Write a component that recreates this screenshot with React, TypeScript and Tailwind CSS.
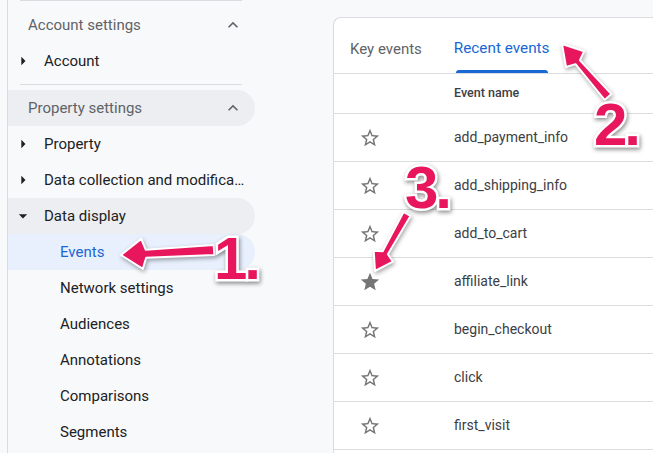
import React from 'react';

type Pt = [number, number];

// builds a tapered arrow polygon from tail to tip
function arrowPoints(tip: Pt, tail: Pt, headLen: number, headHalf: number, neckHalf: number, tailHalf: number) {
  const dx = tail[0] - tip[0];
  const dy = tail[1] - tip[1];
  const len = Math.hypot(dx, dy);
  const ux = dx / len;
  const uy = dy / len;
  const px = -uy;
  const py = ux;
  const neck: Pt = [tip[0] + ux * headLen, tip[1] + uy * headLen];
  const pts: Pt[] = [
    tip,
    [neck[0] + px * headHalf - ux * 4, neck[1] + py * headHalf - uy * 4],
    [neck[0] + px * neckHalf, neck[1] + py * neckHalf],
    [tail[0] + px * tailHalf, tail[1] + py * tailHalf],
    [tail[0] - px * tailHalf, tail[1] - py * tailHalf],
    [neck[0] - px * neckHalf, neck[1] - py * neckHalf],
    [neck[0] - px * headHalf - ux * 4, neck[1] - py * headHalf - uy * 4],
  ];
  return pts.map((p) => `${p[0].toFixed(1)},${p[1].toFixed(1)}`).join(' ');
}

const arrows = [
  arrowPoints([121, 255], [214, 250], 25, 15, 4, 5),
  arrowPoints([562, 44], [608, 97], 24, 12, 3, 4.5),
  arrowPoints([375, 271], [407, 214], 21, 11, 3, 4),
];

const events = [
  { name: 'add_payment_info', key: false },
  { name: 'add_shipping_info', key: false },
  { name: 'add_to_cart', key: false },
  { name: 'affiliate_link', key: true },
  { name: 'begin_checkout', key: false },
  { name: 'click', key: false },
  { name: 'first_visit', key: false },
];

const subItems = ['Network settings', 'Audiences', 'Annotations', 'Comparisons', 'Segments'];

function ChevronUp() {
  return (
    <svg viewBox="0 0 24 24" className="w-5 h-5 fill-[#5f6368]">
      <path d="M7.41 15.41L12 10.83l4.59 4.58L18 14l-6-6-6 6z" />
    </svg>
  );
}

function Caret({ down }: { down?: boolean }) {
  return (
    <svg viewBox="0 0 24 24" className="w-5 h-5 fill-[#202124] shrink-0">
      <path d={down ? 'M7 10l5 5 5-5z' : 'M10 17l5-5-5-5v10z'} />
    </svg>
  );
}

function Star({ filled }: { filled?: boolean }) {
  return (
    <svg viewBox="0 0 24 24" className="w-[22px] h-[22px] fill-[#757575]">
      {filled ? (
        <path d="M12 17.27L18.18 21l-1.64-7.03L22 9.24l-7.19-.61L12 2 9.19 8.63 2 9.24l5.46 4.73L5.82 21z" />
      ) : (
        <path d="M22 9.24l-7.19-.62L12 2 9.19 8.63 2 9.24l5.46 4.73L5.82 21 12 17.27 18.18 21l-1.63-7.03L22 9.24zM12 15.4l-3.76 2.27 1-4.28-3.32-2.88 4.38-.38L12 6.1l1.71 4.04 4.38.38-3.32 2.88 1 4.28L12 15.4z" />
      )}
    </svg>
  );
}

function NavRow({ label, down, pill }: { label: string; down?: boolean; pill?: boolean }) {
  return (
    <div className={`flex h-9 items-center pl-[5px] rounded-r-full ${pill ? 'bg-[#eceef1]' : ''}`}>
      <Caret down={down} />
      <span className="ml-[11px] text-[15px] text-[#202124] truncate pr-[10px]">{label}</span>
    </div>
  );
}

export default function App() {
  return (
    <div className="relative w-[653px] h-[453px] overflow-hidden bg-[#f8f9fa] flex font-['Roboto',sans-serif]">
      {/* Sidebar */}
      <aside className="ml-[7px] w-[248px] shrink-0 border-l border-[#dadce0] flex flex-col">
        <div className="ml-[12px] mr-[13px] border-t border-[#dadce0]" />
        <div className="mt-[6px] flex h-9 items-center justify-between pl-[20px] pr-[12px]">
          <span className="text-[15px] text-[#5f6368]">Account settings</span>
          <ChevronUp />
        </div>
        <NavRow label="Account" />
        <div className="mt-[5px] ml-[12px] mr-[13px] border-t border-[#dadce0]" />
        <div className="mt-[5px] flex h-9 items-center justify-between pl-[20px] pr-[12px] rounded-r-full bg-[#eceef1]">
          <span className="text-[15px] text-[#5f6368]">Property settings</span>
          <ChevronUp />
        </div>
        <NavRow label="Property" />
        <NavRow label="Data collection and modifications" />
        <NavRow label="Data display" down pill />
        <div className="flex h-9 items-center pl-[52px] rounded-r-full bg-[#e8f0fe]">
          <span className="text-[15px] text-[#1967d2]">Events</span>
        </div>
        {subItems.map((s) => (
          <div key={s} className="flex h-9 items-center pl-[52px]">
            <span className="text-[15px] text-[#202124]">{s}</span>
          </div>
        ))}
      </aside>

      {/* Main card */}
      <main className="ml-[78px] mt-[17px] flex-1 bg-white border-l border-t border-[#dadce0] rounded-tl-lg">
        <div className="flex h-[56px] pt-2 border-b border-[#dadce0]">
          <div className="px-4 flex items-center">
            <span className="text-[15px] text-[#5f6368]">Key events</span>
          </div>
          <div className="pl-4 pr-3 flex flex-col">
            <div className="flex-1 flex items-center">
              <span className="text-[15.3px] text-[#1967d2]">Recent events</span>
            </div>
            <div className="h-[3px] mx-[2px] rounded-t-full bg-[#1967d2]" />
          </div>
        </div>
        <div className="flex h-[40px] items-center border-b border-[#dadce0]">
          <div className="w-[120px]" />
          <span className="text-[12.5px] font-medium text-[#3c4043]">Event name</span>
        </div>
        {events.map((e) => (
          <div key={e.name} className="flex h-[48px] items-center border-b border-[#dadce0]">
            <div className="w-[120px] pl-[25px] flex items-center">
              <Star filled={e.key} />
            </div>
            <span className="text-[14px] text-[#3c4043]">{e.name}</span>
          </div>
        ))}
      </main>

      {/* Annotations */}
      <svg className="absolute inset-0 w-[653px] h-[453px] pointer-events-none drop-shadow-[1px_2px_2px_rgba(0,0,0,0.35)]" viewBox="0 0 653 453">
        {arrows.map((p, i) => (
          <polygon key={i} points={p} fill="#e8175d" stroke="#ffffff" strokeWidth="2" strokeLinejoin="round" />
        ))}
      </svg>
      {[
        { t: '1.', cls: 'left-[214px] top-[229px]' },
        { t: '2.', cls: 'left-[594px] top-[95px]' },
        { t: '3.', cls: 'left-[405px] top-[158px]' },
      ].map((n) => (
        <div
          key={n.t}
          className={`absolute ${n.cls} font-['Liberation_Sans',sans-serif] font-bold text-[60px] leading-none tracking-[-3px] text-[#e8175d] [-webkit-text-stroke:5px_white] [paint-order:stroke_fill] drop-shadow-[1px_2px_2px_rgba(0,0,0,0.45)]`}
        >
          {n.t}
        </div>
      ))}
    </div>
  );
}
